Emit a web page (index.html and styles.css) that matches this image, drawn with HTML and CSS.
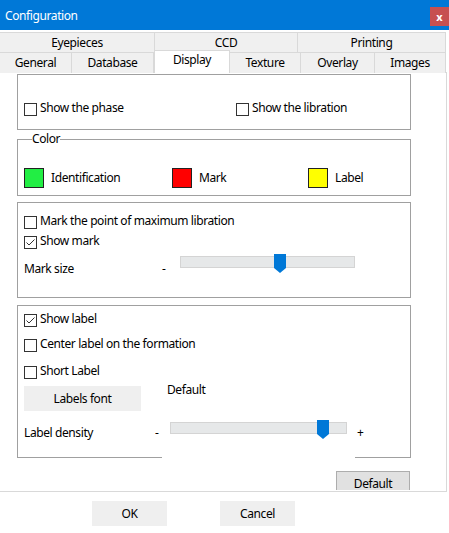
FILE: index.html
```html
<!DOCTYPE html>
<html lang="en">
<head>
<meta charset="utf-8">
<title>Configuration</title>
<link rel="stylesheet" href="styles.css">
</head>
<body>
<div class="titlebar">
  <span class="title">Configuration</span>
  <span class="close">x</span>
</div>

<div class="tabs">
  <div class="tabrow row1">
    <div class="tab">Eyepieces</div>
    <div class="tab">CCD</div>
    <div class="tab">Printing</div>
  </div>
  <div class="tabrow row2">
    <div class="tab">General</div>
    <div class="tab">Database</div>
    <div class="tab active">Display</div>
    <div class="tab">Texture</div>
    <div class="tab">Overlay</div>
    <div class="tab">Images</div>
  </div>
</div>

<div class="page">
  <div class="page-inner">
    <div class="group g1">
      <div class="check phase"><span class="box"></span><span>Show the phase</span></div>
      <div class="check"><span class="box"></span><span>Show the libration</span></div>
    </div>

    <fieldset class="group g2">
      <legend>Color</legend>
      <div class="colors">
        <div class="color c-ident"><span class="swatch green"></span><span class="ctext">Identification</span></div>
        <div class="color c-mark"><span class="swatch red"></span><span class="ctext">Mark</span></div>
        <div class="color"><span class="swatch yellow"></span><span class="ctext">Label</span></div>
      </div>
    </fieldset>

    <div class="group g3">
      <div class="check"><span class="box"></span><span>Mark the point of maximum libration</span></div>
      <div class="check gap4"><span class="box checked"><svg width="11" height="11" viewBox="0 0 11 11"><path d="M1.5 5.5 L4 8 L9.5 2.5" fill="none" stroke="#333" stroke-width="1"/></svg></span><span>Show mark</span></div>
      <div class="slider-row mark">
        <span class="slabel">Mark size</span>
        <span class="minus">-</span>
        <div class="slider">
          <div class="track">
            <svg class="thumb" style="left:93px" width="12" height="19" viewBox="0 0 12 19"><path d="M0 0 H12 V14 L6 19 L0 14 Z" fill="#0078d7"/></svg>
          </div>
        </div>
      </div>
    </div>

    <div class="group g4">
      <div class="check"><span class="box checked"><svg width="11" height="11" viewBox="0 0 11 11"><path d="M1.5 5.5 L4 8 L9.5 2.5" fill="none" stroke="#333" stroke-width="1"/></svg></span><span>Show label</span></div>
      <div class="check gap9"><span class="box"></span><span>Center label on the formation</span></div>
      <div class="check gap11"><span class="box"></span><span>Short Label</span></div>
      <div class="font-row">
        <button class="btn font-btn" type="button">Labels font</button>
        <span class="font-name">Default</span>
      </div>
      <div class="slider-row density">
        <span class="slabel">Label density</span>
        <span class="minus">-</span>
        <div class="slider">
          <div class="track">
            <svg class="thumb" style="left:146px" width="12" height="19" viewBox="0 0 12 19"><path d="M0 0 H12 V14 L6 19 L0 14 Z" fill="#0078d7"/></svg>
          </div>
        </div>
        <span class="plus">+</span>
      </div>
    </div>

    <div class="page-actions">
      <button class="btn default-btn" type="button">Default</button>
    </div>
  </div>
</div>

<div class="footer">
  <button class="btn foot-btn" type="button">OK</button>
  <button class="btn foot-btn" type="button">Cancel</button>
</div>
</body>
</html>
```

FILE: styles.css
```css
* {
  box-sizing: border-box;
}

html,
body {
  margin: 0;
  padding: 0;
  background: #ffffff;
}

body {
  width: 449px;
  height: 533px;
  overflow: hidden;
  font-family: "Noto Sans", "Segoe UI", sans-serif;
  font-size: 12px;
  line-height: 16px;
  letter-spacing: -0.4px;
  color: #000000;
}

/* Title bar */
.titlebar {
  height: 30px;
  background: #0078d7;
  color: #ffffff;
  display: flex;
  align-items: flex-start;
  justify-content: space-between;
  padding-left: 5px;
}

.title {
  margin-top: 8px;
}

.close {
  width: 19px;
  height: 19px;
  margin-top: 7px;
  background: #c75050;
  color: #ffffff;
  font-size: 11px;
  font-weight: bold;
  letter-spacing: 0;
  display: flex;
  align-items: center;
  justify-content: center;
}

/* Tabs */
.tabs {
  margin-top: 2px;
  width: 447px;
}

.tabrow {
  display: grid;
  height: 20px;
}

.row1 {
  grid-template-columns: 155px 143px 148px;
}

.row2 {
  grid-template-columns: 72px 82px 76px 71px 74px 71px;
}

.tab {
  background: #f0f0f0;
  border-top: 1px solid #d9d9d9;
  border-right: 1px solid #d9d9d9;
  display: flex;
  justify-content: center;
  align-items: flex-start;
  padding-top: 2px;
  white-space: nowrap;
}

.tab.active {
  background: #ffffff;
  border-left: 1px solid #d9d9d9;
  margin-top: -2px;
  height: 23px;
  padding-top: 1px;
  position: relative;
  z-index: 1;
}

/* Page */
.page {
  width: 447px;
  height: 420px;
  border-top: 1px solid #d9d9d9;
  border-right: 1px solid #d9d9d9;
  border-bottom: 1px solid #d9d9d9;
  padding-bottom: 1px;
  background: #ffffff;
}

.page-inner {
  height: 417px;
  overflow: hidden;
}

.group {
  width: 394px;
  margin: 0 0 0 17px;
  border: 1px solid #a0a0a0;
  background: #ffffff;
}

.g1 {
  margin-top: 1px;
  height: 56px;
  padding: 25px 0 0 6px;
  display: flex;
  align-items: flex-start;
}

.phase {
  width: 212px;
}

/* Checkbox rows */
.check {
  display: flex;
  align-items: flex-start;
  height: 16px;
  gap: 3px;
  white-space: nowrap;
}

.box {
  width: 13px;
  height: 13px;
  margin-top: 3px;
  border: 1px solid #333333;
  background: #ffffff;
  flex: none;
  display: flex;
}

.gap4 {
  margin-top: 4px;
}

.gap9 {
  margin-top: 9px;
}

.gap11 {
  margin-top: 11px;
}

/* Color group */
fieldset.g2 {
  margin-top: 1px;
  padding: 0 0 7px 6px;
  min-inline-size: 0;
}

.g2 legend {
  margin-left: 8px;
  padding: 0;
  line-height: 16px;
}

.colors {
  display: flex;
  padding-top: 21px;
}

.color {
  display: flex;
  align-items: flex-start;
  gap: 7px;
  height: 20px;
  white-space: nowrap;
}

.ctext {
  margin-top: 2px;
}

.c-ident {
  width: 148px;
}

.c-mark {
  width: 136px;
}

.swatch {
  width: 20px;
  height: 20px;
  border: 1px solid #222222;
  flex: none;
}

.green {
  background: #22ee44;
}

.red {
  background: #ff0000;
}

.yellow {
  background: #ffff00;
}

/* Mark group */
.g3 {
  margin-top: 6px;
  height: 96px;
  padding: 10px 0 0 6px;
}

/* Sliders */
.slider-row {
  display: flex;
  align-items: flex-start;
  white-space: nowrap;
}

.slider {
  background: #ffffff;
  padding-left: 8px;
  flex: none;
}

.track {
  position: relative;
  height: 12px;
  background: #e6e8e9;
  border: 1px solid #d4d4d4;
}

.thumb {
  position: absolute;
  top: -3px;
  display: block;
}

.mark .slabel {
  width: 138px;
  margin-top: 12px;
}

.mark .minus {
  width: 10px;
  margin-top: 12px;
}

.mark .slider {
  width: 193px;
  height: 28px;
  padding-top: 7px;
}

.mark .track {
  width: 175px;
}

.density .slabel {
  width: 131px;
  margin-top: 14px;
}

.density .minus {
  width: 7px;
  margin-top: 14px;
}

.density .slider {
  width: 193px;
  height: 47px;
  padding-top: 11px;
}

.density .track {
  width: 177px;
}

.plus {
  margin-left: 2px;
  margin-top: 14px;
}

/* Label group */
.g4 {
  margin-top: 7px;
  height: 153px;
  padding: 5px 0 0 6px;
}

.font-row {
  display: flex;
  align-items: flex-start;
  height: 32px;
}

.btn {
  font: inherit;
  letter-spacing: inherit;
  color: #000000;
  background: #efefef;
  border: none;
  padding: 0;
  height: 25px;
  display: flex;
  align-items: center;
  justify-content: center;
}

.font-btn {
  width: 117px;
  margin-top: 7px;
}

.font-name {
  margin-top: 3px;
  margin-left: 26px;
}

.page-actions {
  display: flex;
  justify-content: flex-end;
  padding-right: 36px;
  margin-top: 13px;
}

.default-btn {
  width: 74px;
  background: #e1e1e1;
  border: 1px solid #adadad;
}

/* Footer */
.footer {
  display: flex;
  gap: 53px;
  padding-left: 92px;
  margin-top: 9px;
}

.foot-btn {
  width: 75px;
}
```
